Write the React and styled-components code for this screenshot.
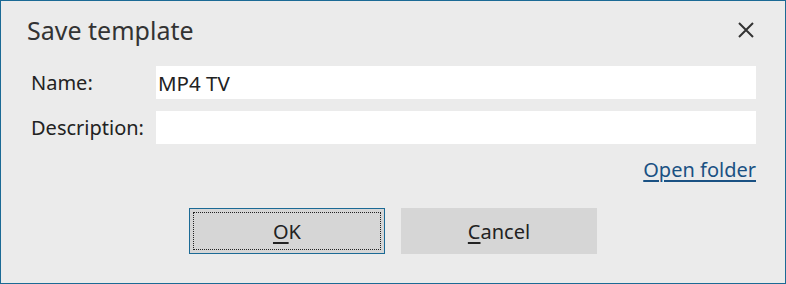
import React from 'react';
import styled, { createGlobalStyle } from 'styled-components';

const GlobalStyle = createGlobalStyle`
  html, body {
    margin: 0;
    padding: 0;
    background: #ebebeb;
  }
  * {
    box-sizing: border-box;
  }
`;

const Dialog = styled.div`
  width: 786px;
  height: 284px;
  border: 1px solid #1b6a95;
  background: #ebebeb;
  font-family: 'Noto Sans', 'Open Sans', sans-serif;
  color: #222;
  display: flex;
  flex-direction: column;
`;

const TitleBar = styled.div`
  height: 58px;
  display: flex;
  align-items: center;
  justify-content: space-between;
  padding: 0 31px 0 26px;
`;

const Title = styled.h1`
  margin: 0;
  font-size: 25px;
  line-height: 30px;
  font-weight: 400;
  color: #333;
`;

const CloseButton = styled.button`
  width: 16px;
  height: 16px;
  padding: 0;
  border: 0;
  background: none;
  display: flex;
  cursor: pointer;
`;

const Form = styled.div`
  display: grid;
  grid-template-columns: 125px 1fr;
  row-gap: 12px;
  align-items: center;
  padding: 7px 29px 0 30px;
`;

const Label = styled.label`
  font-size: 20px;
  line-height: 24px;
`;

const Input = styled.input`
  height: 33px;
  border: 0;
  outline: none;
  background: #fff;
  padding: 0 2px;
  font-family: inherit;
  font-size: 20.5px;
  color: #222;
`;

const LinkRow = styled.div`
  display: flex;
  justify-content: flex-end;
  padding: 14px 29px 0;
  line-height: 24px;
`;

const Link = styled.a`
  font-size: 20px;
  color: #1a5183;
  text-decoration: underline;
  text-underline-offset: 3px;
  cursor: pointer;
`;

const Buttons = styled.div`
  display: flex;
  justify-content: center;
  gap: 16px;
  padding-top: 26px;
`;

const Button = styled.button`
  position: relative;
  width: 196px;
  height: 46px;
  border: 1px solid ${(p) => (p.$default ? '#1b6a95' : '#d6d6d6')};
  background: #d6d6d6;
  font-family: inherit;
  font-size: 20px;
  color: #222;
  padding: 0;

  &::after {
    content: '';
    display: ${(p) => (p.$default ? 'block' : 'none')};
    position: absolute;
    inset: 3px;
    border: 1px dotted #222;
  }

  u {
    text-underline-offset: 3px;
  }
`;

export default function App() {
  return (
    <>
      <GlobalStyle />
      <Dialog>
        <TitleBar>
          <Title>Save template</Title>
          <CloseButton aria-label="Close">
            <svg width="16" height="16" viewBox="0 0 16 16">
              <path d="M1 1 L15 15 M15 1 L1 15" stroke="#333" strokeWidth="2" />
            </svg>
          </CloseButton>
        </TitleBar>
        <Form>
          <Label>Name:</Label>
          <Input defaultValue="MP4 TV" />
          <Label>Description:</Label>
          <Input defaultValue="" />
        </Form>
        <LinkRow>
          <Link>Open folder</Link>
        </LinkRow>
        <Buttons>
          <Button $default>
            <u>O</u>K
          </Button>
          <Button>
            <u>C</u>ancel
          </Button>
        </Buttons>
      </Dialog>
    </>
  );
}
